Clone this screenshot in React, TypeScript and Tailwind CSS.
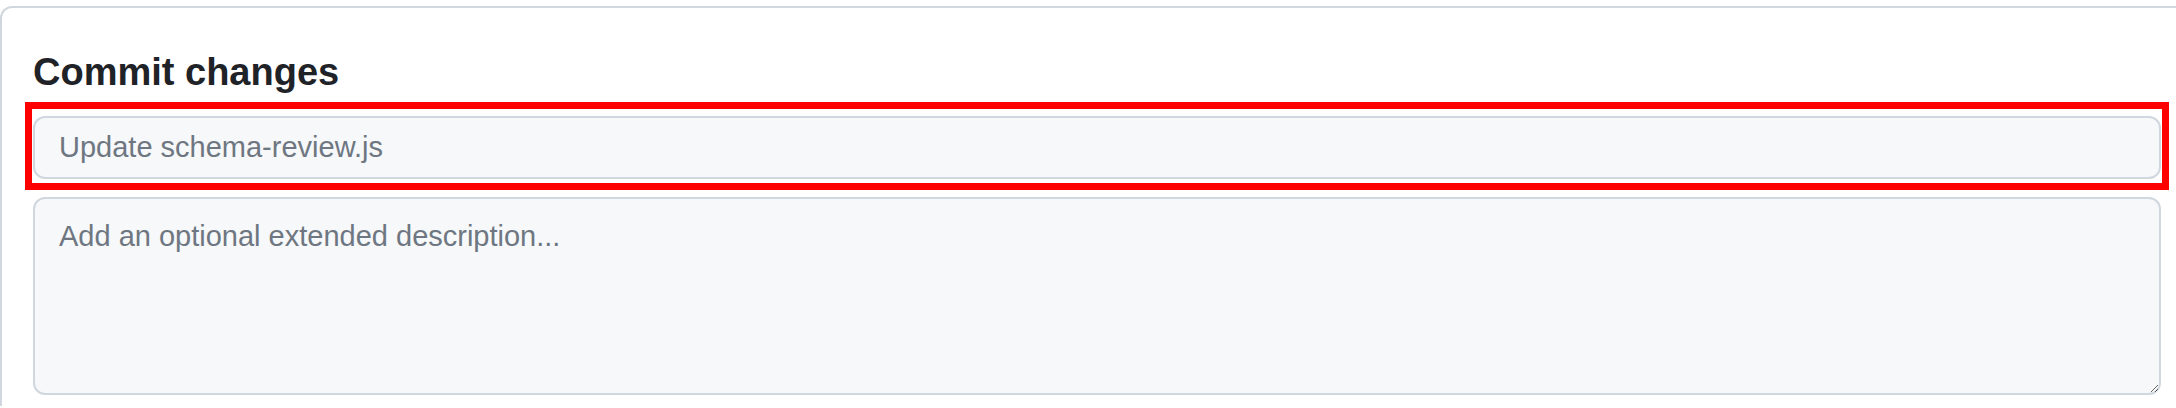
import React from 'react';

const CommitDialog = () => {
  return (
    <div className="min-h-screen bg-white pt-[6px] font-['Liberation_Sans',Arial,sans-serif]">
      <div className="border-l-2 border-t-2 border-[#d0d7de] rounded-tl-[12px] pl-[31px] pr-[15px] pt-[40px] pb-[11px]">
        <h1 className="text-[38px] leading-[48px] font-bold text-[#1f2328]">Commit changes</h1>

        <div className="relative mt-[20px]">
          <input
            type="text"
            placeholder="Update schema-review.js"
            className="block w-full h-[63px] rounded-[12px] border-2 border-[#d0d7de] bg-[#f6f8fa] px-[24px] text-[29px] text-[#1f2328] placeholder:text-[#6e7781] outline-none"
          />
          {/* red highlight drawn over the input */}
          <div className="pointer-events-none absolute -left-[8px] -right-[8px] -top-[14px] -bottom-[11px] border-[7px] border-[#ff0000]"></div>
        </div>

        <textarea
          placeholder="Add an optional extended description..."
          className="mt-[18px] block w-full h-[198px] rounded-[12px] border-2 border-[#d0d7de] bg-[#f6f8fa] px-[24px] pt-[17px] text-[29px] leading-[40px] text-[#1f2328] placeholder:text-[#6e7781] outline-none"
        />
      </div>
    </div>
  );
};

export default function App() {
  return <CommitDialog />;
}
